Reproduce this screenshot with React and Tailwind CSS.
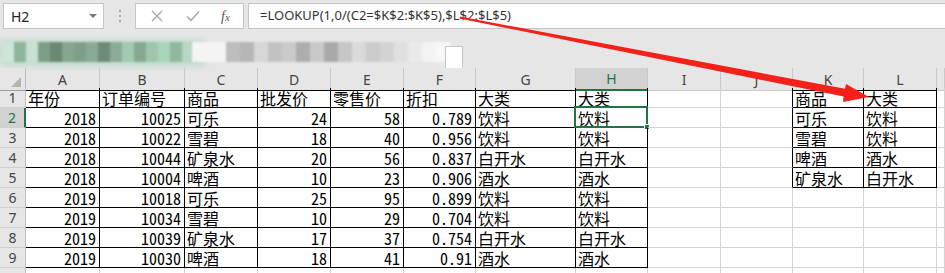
import React from 'react';

const GRID = 'grid grid-cols-[26px_74px_85px_73px_73px_73px_72px_100px_72px_73px_72px_71px_73px_8px]';
const LETTERS = ['A', 'B', 'C', 'D', 'E', 'F', 'G', 'H', 'I', 'J', 'K', 'L', ''];
const CELL_FONT = { fontFamily: '"Noto Sans Mono CJK SC", "Noto Sans CJK SC", "Liberation Mono", monospace' };
const UI_FONT = { fontFamily: '"Noto Sans", "Liberation Sans", sans-serif' };

const rows = [
  ['年份', '订单编号', '商品', '批发价', '零售价', '折扣', '大类', '大类', '', '', '商品', '大类', ''],
  [2018, 10025, '可乐', 24, 58, 0.789, '饮料', '饮料', '', '', '可乐', '饮料', ''],
  [2018, 10022, '雪碧', 18, 40, 0.956, '饮料', '饮料', '', '', '雪碧', '饮料', ''],
  [2018, 10044, '矿泉水', 20, 56, 0.837, '白开水', '白开水', '', '', '啤酒', '酒水', ''],
  [2018, 10004, '啤酒', 10, 23, 0.906, '酒水', '酒水', '', '', '矿泉水', '白开水', ''],
  [2019, 10018, '可乐', 25, 95, 0.899, '饮料', '饮料', '', '', '', '', ''],
  [2019, 10034, '雪碧', 10, 29, 0.704, '饮料', '饮料', '', '', '', '', ''],
  [2019, 10039, '矿泉水', 17, 37, 0.754, '白开水', '白开水', '', '', '', '', ''],
  [2019, 10030, '啤酒', 18, 41, 0.91, '酒水', '酒水', '', '', '', '', ''],
  ['', '', '', '', '', '', '', '', '', '', '', '', ''],
];

const greens = ['#cfe5d8', '#8fb59d', '#c9e0d2', '#7c9d88', '#6b8873', '#86a690', '#7f9f8a', '#89aa94', '#6e8b77', '#8aab95', '#a4c9b2', '#86a891', '#9ec6ad', '#a9d5bb', '#90b89f', '#b7d6c3'];
const grays = ['#bdbdbd', '#b6b6b6', '#d7d7d7', '#c2c2c2', '#cacaca', '#adadad', '#c9c9c9', '#a9a9a9', '#c6c6c6', '#dadada', '#cbcbcb', '#d3d3d3', '#e0e0e0', '#eaeaea', '#f3f3f3', '#f7f7f7'];

// black bordered tables: A1:H9 and K1:L5
const isBlack = (r, c) => (r <= 9 && c <= 7) || (r <= 5 && (c === 10 || c === 11));

function Cell({ r, c, v }) {
  const black = isBlack(r, c);
  const rightBlack = black || isBlack(r, c + 1);
  const num = typeof v === 'number';
  const selected = r === 2 && c === 7;
  return (
    <div
      className={`relative h-[20px] border-r border-b flex items-center whitespace-nowrap text-[16px] leading-[16px] text-black ${
        rightBlack ? 'border-r-black' : 'border-r-[#d4d4d4]'
      } ${black ? 'border-b-black' : 'border-b-[#d4d4d4]'} ${num ? 'justify-end pr-[3px]' : 'pl-[2px]'}`}
      style={CELL_FONT}
    >
      {v}
      {selected && (
        <div className="absolute -top-[2px] -left-[2px] w-[74px] h-[22px] border-2 border-[#217346]">
          <div className="absolute -right-[4px] -bottom-[4px] w-[6px] h-[6px] bg-[#217346] border border-white" />
        </div>
      )}
    </div>
  );
}

export default function App() {
  return (
    <div className="relative w-[945px] h-[273px] overflow-hidden bg-white">
      {/* formula bar */}
      <div className="flex h-[32px] bg-[#e6e6e6] pt-[3px] pl-[3px]" style={UI_FONT}>
        <div className="w-[101px] h-[26px] bg-white border border-[#c6c6c6] flex items-center justify-between pl-[7px] pr-[6px] text-[14px] text-[#222]">
          <span>H2</span>
          <span className="w-0 h-0 border-l-[4px] border-r-[4px] border-t-[4px] border-l-transparent border-r-transparent border-t-[#777]" />
        </div>
        <div className="w-[31px] h-[26px] flex flex-col items-center justify-center gap-[3px]">
          <span className="w-[2px] h-[2px] bg-[#a8a8a8]" />
          <span className="w-[2px] h-[2px] bg-[#a8a8a8]" />
          <span className="w-[2px] h-[2px] bg-[#a8a8a8]" />
        </div>
        <div className="w-[109px] h-[26px] bg-white border border-[#c6c6c6] flex items-center">
          <svg width="16" height="16" viewBox="0 0 16 16" className="ml-[13px]">
            <path d="M3 3 L13 13 M13 3 L3 13" stroke="#a6a6a6" strokeWidth="1.3" />
          </svg>
          <svg width="16" height="16" viewBox="0 0 16 16" className="ml-[20px]">
            <path d="M2 8.5 L6 12.5 L14 3.5" stroke="#a6a6a6" strokeWidth="1.5" fill="none" />
          </svg>
          <span className="ml-[20px] text-[14px] italic text-[#555]" style={{ fontFamily: '"Liberation Serif", serif' }}>
            f<span className="text-[11px]">x</span>
          </span>
        </div>
        <div className="ml-[4px] flex-1 h-[26px] bg-white border border-r-0 border-[#c6c6c6] flex items-center pl-[11px] text-[13px] text-[#333]">
          =LOOKUP(1,0/(C2=$K$2:$K$5),$L$2:$L$5)
        </div>
      </div>

      {/* blurred ribbon strip */}
      <div className="h-[36px] bg-[#e6e6e6] relative">
        <div className="absolute left-0 top-[8px] w-[205px] h-[26px] bg-[#bfdccb] blur-[3px]" />
        <div className="absolute left-[2px] top-[10px] flex blur-[1px]">
          {greens.map((g, i) => (
            <div key={i} className="w-[12px] h-[20px]" style={{ background: g }} />
          ))}
        </div>
        <div className="absolute left-[192px] top-[10px] w-[36px] h-[20px] bg-[#f4f4f4] blur-[1px]" />
        <div className="absolute left-[226px] top-[10px] flex blur-[1px]">
          {grays.map((g, i) => (
            <div key={i} className="w-[14px] h-[20px]" style={{ background: g }} />
          ))}
        </div>
        <div className="absolute left-[445px] top-[14px] w-[18px] h-[22px] bg-white border border-b-0 border-[#c6c6c6]" />
      </div>

      {/* column headers */}
      <div className={`${GRID} h-[20px]`} style={UI_FONT}>
        <div className="relative bg-[#e6e6e6] border-r border-b border-r-[#bdbdbd] border-b-[#9e9e9e]">
          <svg width="10" height="10" viewBox="0 0 10 10" className="absolute right-[4px] bottom-[3px]">
            <polygon points="10,0 10,10 0,10" fill="#b4b4b4" />
          </svg>
        </div>
        {LETTERS.map((l, c) => {
          const sel = c === 7;
          const black = isBlack(1, c);
          return (
            <div
              key={c}
              className={`flex items-center justify-center text-[14px] border-r border-r-[#c8c8c8] ${
                sel ? 'bg-[#d2d2d2] text-[#217346] border-b-2 border-b-[#217346]' : `bg-[#e6e6e6] text-[#444] border-b ${black ? 'border-b-black' : 'border-b-[#c8c8c8]'}`
              }`}
            >
              {l}
            </div>
          );
        })}
      </div>

      {/* rows */}
      {rows.map((row, i) => {
        const r = i + 1;
        const sel = r === 2;
        return (
          <div key={r} className={`${GRID} h-[20px]`}>
            <div
              className={`flex items-center justify-center text-[14px] leading-[16px] border-b border-b-[#cfcfcf] ${
                sel ? 'bg-[#d2d2d2] text-[#217346] border-r-2 border-r-[#217346]' : 'bg-[#e6e6e6] text-[#444] border-r border-r-[#bdbdbd]'
              }`}
              style={UI_FONT}
            >
              {r < 10 ? r : ''}
            </div>
            {row.map((v, c) => (
              <Cell key={c} r={r} c={c} v={v} />
            ))}
          </div>
        );
      })}

      {/* red arrow annotation */}
      <svg width="945" height="273" className="absolute left-0 top-0 pointer-events-none">
        <polygon
          points="460,16.5 845,88.8 846,84 869,97 843,102 843.6,96.6 459.6,18.5"
          fill="#f4211a"
        />
      </svg>
    </div>
  );
}
